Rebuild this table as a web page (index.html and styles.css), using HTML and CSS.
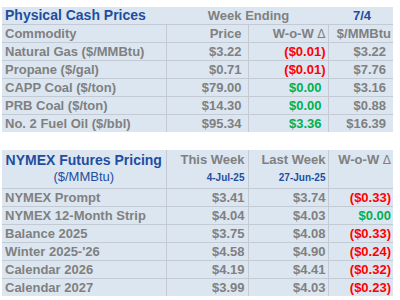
FILE: index.html
```html
<!DOCTYPE html>
<html lang="en">
<head>
    <meta charset="UTF-8">
    <title>Energy Prices</title>
    <link rel="stylesheet" href="styles.css">
</head>
<body>

    <table class="prices cash">
        <colgroup>
            <col class="c1"><col class="c2"><col class="c3"><col class="c4">
        </colgroup>
        <tr class="title-row">
            <td class="title">Physical Cash Prices</td>
            <td colspan="2" class="center">Week Ending</td>
            <td class="center blue">7/4</td>
        </tr>
        <tr>
            <td>Commodity</td>
            <td class="num p2">Price</td>
            <td class="num p3">W-o-W <span class="delta">&#916;</span></td>
            <td class="num p4">$/MMBtu</td>
        </tr>
        <tr>
            <td>Natural Gas ($/MMBtu)</td>
            <td class="num p2">$3.22</td>
            <td class="num p3 red">($0.01)</td>
            <td class="num p4b">$3.22</td>
        </tr>
        <tr>
            <td>Propane ($/gal)</td>
            <td class="num p2">$0.71</td>
            <td class="num p3 red">($0.01)</td>
            <td class="num p4b">$7.76</td>
        </tr>
        <tr>
            <td>CAPP Coal ($/ton)</td>
            <td class="num p2">$79.00</td>
            <td class="num p3b green">$0.00</td>
            <td class="num p4b">$3.16</td>
        </tr>
        <tr>
            <td>PRB Coal ($/ton)</td>
            <td class="num p2">$14.30</td>
            <td class="num p3b green">$0.00</td>
            <td class="num p4b">$0.88</td>
        </tr>
        <tr>
            <td>No. 2 Fuel Oil ($/bbl)</td>
            <td class="num p2">$95.34</td>
            <td class="num p3b green">$3.36</td>
            <td class="num p4b">$16.39</td>
        </tr>
    </table>

    <table class="prices futures">
        <colgroup>
            <col class="c1"><col class="c2"><col class="c3"><col class="c4">
        </colgroup>
        <tr class="head-row">
            <td class="title center">NYMEX Futures Pricing<div class="unit">($/MMBtu)</div></td>
            <td class="num p2f">This Week<div class="date">4-Jul-25</div></td>
            <td class="num p3f">Last Week<div class="date">27-Jun-25</div></td>
            <td class="num p4f">W-o-W <span class="delta">&#916;</span><div class="date">&nbsp;</div></td>
        </tr>
        <tr>
            <td>NYMEX Prompt</td>
            <td class="num p2f">$3.41</td>
            <td class="num p3f">$3.74</td>
            <td class="num p4f red">($0.33)</td>
        </tr>
        <tr>
            <td>NYMEX 12-Month Strip</td>
            <td class="num p2f">$4.04</td>
            <td class="num p3f">$4.03</td>
            <td class="num p4f green">$0.00</td>
        </tr>
        <tr>
            <td>Balance 2025</td>
            <td class="num p2f">$3.75</td>
            <td class="num p3f">$4.08</td>
            <td class="num p4f red">($0.33)</td>
        </tr>
        <tr>
            <td>Winter 2025-'26</td>
            <td class="num p2f">$4.58</td>
            <td class="num p3f">$4.90</td>
            <td class="num p4f red">($0.24)</td>
        </tr>
        <tr>
            <td>Calendar 2026</td>
            <td class="num p2f">$4.19</td>
            <td class="num p3f">$4.41</td>
            <td class="num p4f red">($0.32)</td>
        </tr>
        <tr>
            <td>Calendar 2027</td>
            <td class="num p2f">$3.99</td>
            <td class="num p3f">$4.03</td>
            <td class="num p4f red">($0.23)</td>
        </tr>
    </table>

</body>
</html>
```

FILE: styles.css
```css
body {
    margin: 0;
    padding: 7px 0 0 2px;
    background-color: white;
    font-family: "Liberation Sans", Arial, sans-serif;
}
.prices {
    width: 391px;
    table-layout: fixed;
    border-collapse: collapse;
    background-color: #dce6f1;
    color: #808080;
    font-weight: bold;
    font-size: 13px;
}
.futures {
    margin-top: 18px;
}
.c1 { width: 164px; }
.c2 { width: 82px; }
.c3 { width: 80px; }
.c4 { width: 65px; }
td {
    height: 17px;
    padding: 0 0 0 3px;
    line-height: 15px;
    border: 1px solid #c3cad3;
    white-space: nowrap;
    vertical-align: middle;
}
.prices tr:first-child td {
    border-top: none;
}
.prices tr:last-child td {
    border-bottom: none;
}
.prices td:first-child {
    border-left: none;
}
.prices td:last-child {
    border-right: none;
}
.title-row td {
    border-left: none;
    border-right: none;
}
.title {
    color: #1f4e9f;
    font-size: 14px;
}
.center {
    text-align: center;
}
.num {
    text-align: right;
}
.blue {
    color: #1f4e9f;
}
.red {
    color: #ff0000;
}
.green {
    color: #00b050;
}
.delta {
    font-family: "DejaVu Sans", sans-serif;
    font-weight: normal;
    font-size: 12px;
}
.p2 { padding-right: 6px; }
.p3 { padding-right: 2px; }
.p3b { padding-right: 6px; }
.p4 { padding-right: 2px; }
.p4b { padding-right: 7px; }
.p2f { padding-right: 3px; }
.p3f { padding-right: 2px; }
.p4f { padding-right: 2px; }
.head-row td {
    height: 32px;
    vertical-align: top;
    padding-top: 2px;
}
.head-row .title {
    padding-left: 0;
    line-height: 17px;
}
.unit {
    font-weight: normal;
    font-size: 13px;
    line-height: 16px;
}
.date {
    color: #1f4e9f;
    font-size: 10px;
    line-height: 18px;
    padding-top: 2px;
}
```
